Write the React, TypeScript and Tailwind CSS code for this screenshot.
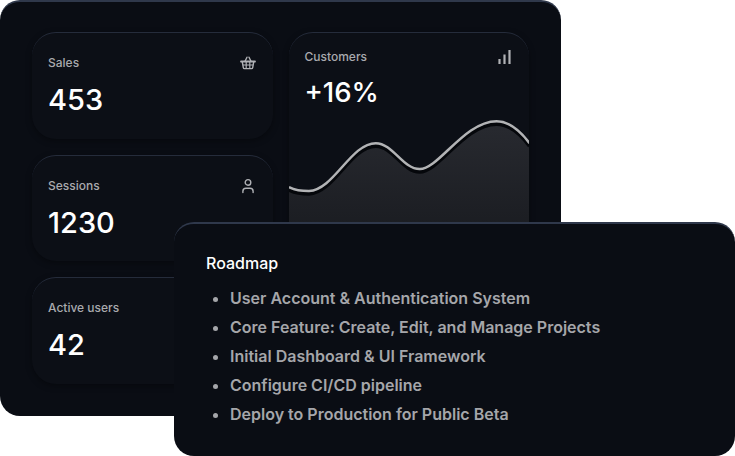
const font = { fontFamily: "Inter, sans-serif" };

const BasketIcon = () => (
  <svg width="16" height="16" viewBox="0 0 16 16" fill="none" stroke="#b0b1b5" strokeWidth="1.4">
    <path d="M1 6.5h14" strokeWidth="1.8" strokeLinecap="round" />
    <path d="M5 6.2 7 2.2M11 6.2 9 2.2" strokeLinecap="round" />
    <path d="M2.3 6.8 3.3 12.6c.1.6.5 1 1.1 1h7.2c.6 0 1-.4 1.1-1l1-5.8" />
    <path d="M2.8 10h10.4M6.2 7v6.5M9.8 7v6.5" strokeWidth="1.2" />
  </svg>
);

const UserIcon = () => (
  <svg width="16" height="16" viewBox="0 0 16 16" fill="none" stroke="#b0b1b5" strokeWidth="1.4">
    <circle cx="8" cy="4.4" r="2.8" />
    <path d="M2.9 14.5v-1.2c0-1.8 1.4-3 3.1-3h4c1.7 0 3.1 1.2 3.1 3v1.2" strokeLinecap="round" />
  </svg>
);

const BarsIcon = () => (
  <svg width="16" height="16" viewBox="0 0 16 16" fill="none" stroke="#b0b1b5" strokeWidth="2.2">
    <path d="M2.5 15V10M7.5 15V5.5M12.5 15V1" />
  </svg>
);

const Card = ({ label, value, icon }: { label: string; value: string; icon: React.ReactNode }) => (
  <div className="rounded-3xl border-t border-t-[#252c3b] bg-[#0c0f16] pt-[22px] pr-[17px] pl-4 shadow-[0_2px_6px_rgba(0,0,0,0.35)]">
    <div className="flex items-center justify-between">
      <span className="text-xs font-medium text-[#a9aaae]">{label}</span>
      {icon}
    </div>
    <div className="mt-[7px] text-[29px] font-[550] text-white">{value}</div>
  </div>
);

const Chart = () => {
  const line = "M0 76C6 79 13 80 20 80C45 79 62 32 87 32C104 32 114 58 131 58C150 58 176 10 208 10C220 10 232 20 241 32";
  return (
    <svg viewBox="0 0 241 200" className="h-[200px] w-full" fill="none">
      <defs>
        <linearGradient id="area" x1="0" y1="0" x2="0" y2="1">
          <stop offset="0" stopColor="#282a30" />
          <stop offset="0.6" stopColor="#1a1c21" />
          <stop offset="1" stopColor="#0c0f16" />
        </linearGradient>
      </defs>
      <path d={`${line}V200H0Z`} fill="url(#area)" />
      <path d={line} transform="translate(0 3)" stroke="#05070b" strokeWidth="3.5" />
      <path d={line} stroke="#b2b3b5" strokeWidth="2.5" />
    </svg>
  );
};

const roadmap = [
  "User Account & Authentication System",
  "Core Feature: Create, Edit, and Manage Projects",
  "Initial Dashboard & UI Framework",
  "Configure CI/CD pipeline",
  "Deploy to Production for Public Beta",
];

export default function App() {
  return (
    <div className="relative h-[456px] w-[735px] overflow-hidden bg-white" style={font}>
      <div className="grid h-[416px] w-[561px] grid-cols-2 gap-4 rounded-[20px] border-t-2 border-t-[#2f384b] bg-[#0a0d14] px-8 pt-[30px] pb-8">
        <div className="grid grid-rows-3 gap-4">
          <Card label="Sales" value="453" icon={<BasketIcon />} />
          <Card label="Sessions" value="1230" icon={<UserIcon />} />
          <Card label="Active users" value="42" icon={<span className="h-4" />} />
        </div>
        <div className="overflow-hidden rounded-3xl border-t border-t-[#252c3b] bg-[#0c0f16] shadow-[0_2px_6px_rgba(0,0,0,0.35)]">
          <div className="flex items-center justify-between px-4 pt-4">
            <span className="text-xs font-medium text-[#a9aaae]">Customers</span>
            <BarsIcon />
          </div>
          <div className="mt-[7px] h-[39px] px-4 text-[27.5px] font-[550] text-white">+16%</div>
          <Chart />
        </div>
      </div>
      <div className="absolute top-[222px] left-[174px] h-[234px] w-[561px] rounded-[20px] border-t-2 border-t-[#2f384b] bg-[#0a0d14] px-8 pt-[27px]">
        <h2 className="text-base font-medium text-white">Roadmap</h2>
        <ul className="mt-[9px] list-disc pl-6 text-base leading-[29px] font-semibold text-[#a5a6aa] marker:text-[#a5a6aa]">
          {roadmap.map((item) => (
            <li key={item}>{item}</li>
          ))}
        </ul>
      </div>
    </div>
  );
}
